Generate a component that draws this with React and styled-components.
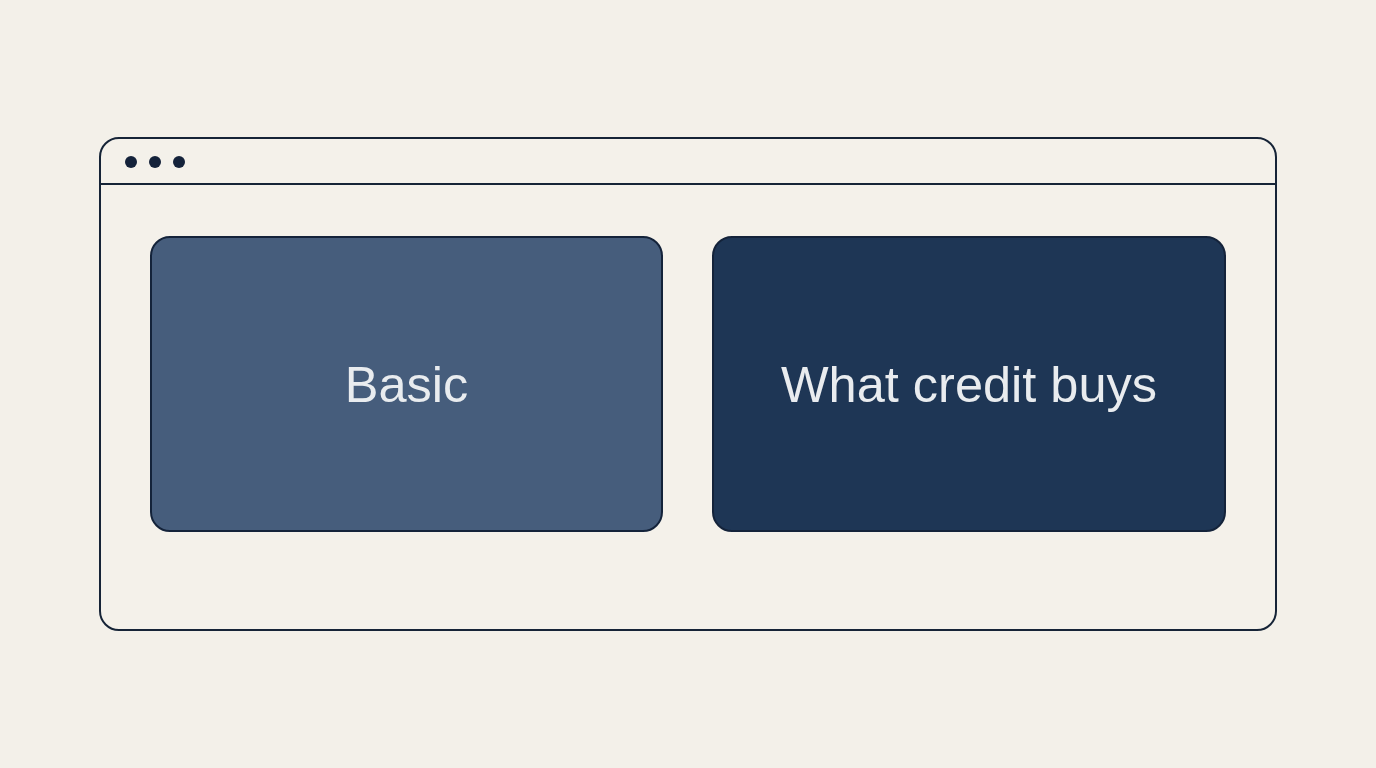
import React from 'react'
import styled, { createGlobalStyle } from 'styled-components'

const Global = createGlobalStyle`
  html, body {
    margin: 0;
    padding: 0;
    background: #f3f0e9;
  }
  body {
    font-family: "Liberation Sans", Arial, sans-serif;
  }
`

const Page = styled.div`
  width: 1376px;
  height: 768px;
  box-sizing: border-box;
  padding: 137px 0 0 99px;
`

const Window = styled.div`
  width: 1178px;
  height: 494px;
  box-sizing: border-box;
  border: 2px solid #162437;
  border-radius: 20px;
  background: #f4f1ea;
  display: flex;
  flex-direction: column;
`

const TitleBar = styled.div`
  height: 46px;
  box-sizing: border-box;
  border-bottom: 2px solid #162437;
  display: flex;
  align-items: center;
  gap: 12px;
  padding: 1px 0 0 24px;
`

const Dot = styled.span`
  width: 12px;
  height: 12px;
  border-radius: 50%;
  background: #14223a;
`

const Body = styled.div`
  display: grid;
  grid-template-columns: 513px 514px;
  gap: 49px;
  padding: 51px 0 0 49px;
`

const Card = styled.div`
  height: 296px;
  box-sizing: border-box;
  border: 2px solid #14233a;
  border-radius: 20px;
  background: ${p => (p.$dark ? '#1e3655' : '#465d7c')};
  display: flex;
  align-items: center;
  justify-content: center;
  color: #e9ecef;
  font-size: 50.5px;
  padding-top: 0;
`

export default function App() {
  return (
    <>
      <Global />
      <Page>
        <Window>
          <TitleBar>
            <Dot />
            <Dot />
            <Dot />
          </TitleBar>
          <Body>
            <Card>Basic</Card>
            <Card $dark>What credit buys</Card>
          </Body>
        </Window>
      </Page>
    </>
  )
}
